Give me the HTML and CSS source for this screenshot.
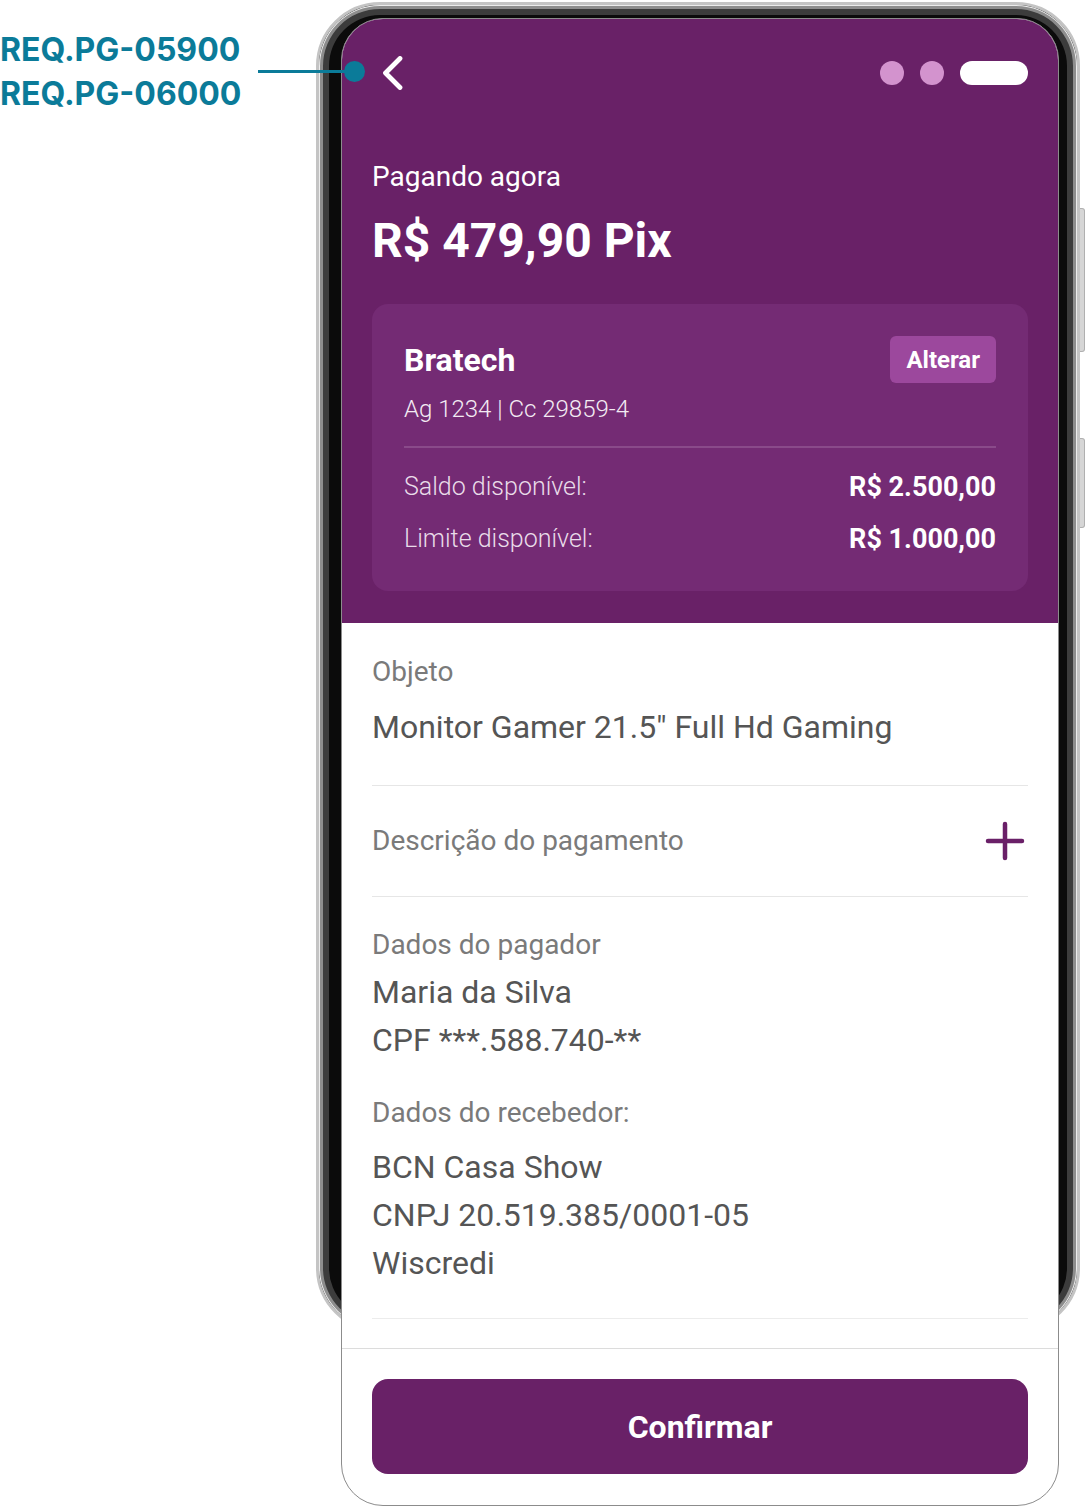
FILE: index.html
```html
<!DOCTYPE html>
<html lang="pt-BR">
<head>
<meta charset="utf-8">
<title>Pagamento Pix</title>
<link rel="stylesheet" href="styles.css">
</head>
<body>
<div class="canvas">
  <div class="annotation">
    <div class="req-labels">
      <div class="req">REQ.PG-05900</div>
      <div class="req">REQ.PG-06000</div>
    </div>
    <div class="connector"></div>
    <div class="connector-dot"></div>
  </div>

  <div class="phone">
    <div class="frame">
      <span class="side-btn side-btn-1"></span>
      <span class="side-btn side-btn-2"></span>
    </div>
    <div class="screen">
      <header class="hero">
        <div class="topbar">
          <svg class="back" width="24" height="34" viewBox="0 0 24 34" aria-hidden="true">
            <path d="M18 2.5 L3.5 17 L18 31.5" fill="none" stroke="#fff" stroke-width="4.8" stroke-linecap="round" stroke-linejoin="round"/>
          </svg>
          <div class="steps">
            <span class="step"></span>
            <span class="step"></span>
            <span class="step step-active"></span>
          </div>
        </div>
        <div class="pay-label">Pagando agora</div>
        <div class="pay-amount">R$ 479,90 Pix</div>

        <section class="account">
          <div class="account-head">
            <div class="bank">Bratech</div>
            <button class="change">Alterar</button>
          </div>
          <div class="agency">Ag 1234 | Cc 29859-4</div>
          <div class="account-divider"></div>
          <div class="balance-row">
            <span class="balance-label">Saldo disponível:</span>
            <span class="balance-value">R$ 2.500,00</span>
          </div>
          <div class="balance-row balance-row-2">
            <span class="balance-label">Limite disponível:</span>
            <span class="balance-value">R$ 1.000,00</span>
          </div>
        </section>
      </header>

      <main class="details">
        <div class="block block-object">
          <div class="label">Objeto</div>
          <div class="value value-object">Monitor Gamer 21.5" Full Hd Gaming</div>
        </div>
        <div class="desc-row">
          <span class="label">Descrição do pagamento</span>
          <svg class="plus" width="40" height="40" viewBox="0 0 40 40" aria-hidden="true">
            <path d="M20 3 V37 M3 20 H37" fill="none" stroke="#6a2068" stroke-width="4.5" stroke-linecap="round"/>
          </svg>
        </div>
        <div class="block block-people">
          <div class="label line">Dados do pagador</div>
          <div class="value line">Maria da Silva</div>
          <div class="value line">CPF ***.588.740-**</div>
          <div class="label line receiver">Dados do recebedor:</div>
          <div class="value line">BCN Casa Show</div>
          <div class="value line">CNPJ 20.519.385/0001-05</div>
          <div class="value line">Wiscredi</div>
        </div>
      </main>

      <footer class="footer">
        <button class="confirm">Confirmar</button>
      </footer>
    </div>
  </div>
</div>
</body>
</html>
```

FILE: styles.css
```css
* { box-sizing: border-box; }

html, body {
  margin: 0;
  padding: 0;
  background: #fff;
}

body {
  font-family: Roboto, "Liberation Sans", Arial, sans-serif;
}

.canvas {
  position: relative;
  width: 1086px;
  height: 1506px;
  overflow: hidden;
  display: flex;
  padding-left: 316px;
  padding-top: 2px;
}

/* ---------- annotation ---------- */
.annotation {
  position: absolute;
  left: 0;
  top: 0;
  width: 370px;
  height: 120px;
  z-index: 5;
}

.req-labels {
  position: absolute;
  left: 0;
  top: 28px;
  display: flex;
  flex-direction: column;
}

.req {
  font-family: Inter, "Open Sans", sans-serif;
  font-weight: 700;
  font-size: 32px;
  line-height: 44px;
  color: #0b7b99;
}

.connector {
  position: absolute;
  left: 258px;
  top: 70px;
  width: 96px;
  height: 3px;
  background: #0b7b99;
}

.connector-dot {
  position: absolute;
  left: 344px;
  top: 61px;
  width: 21px;
  height: 21px;
  border-radius: 50%;
  background: #0b7b99;
}

/* ---------- phone ---------- */
.phone {
  position: relative;
  width: 764px;
  padding: 16px 21px 0 25px;
}

.frame {
  position: absolute;
  left: 0;
  top: 0;
  width: 764px;
  height: 1330px;
  border-radius: 64px;
  border: 3px solid #c4c4c4;
  background: #0b0b0b;
  box-shadow: inset 0 0 0 1px #ececec, inset 0 0 0 4px #8d8d8d, inset 0 0 0 10px #3c3c3c;
}

.side-btn {
  position: absolute;
  right: -8px;
  width: 5px;
  border-radius: 0 3px 3px 0;
  background: #d6d6d6;
  border: 1px solid #b0b0b0;
  border-left: none;
}
.side-btn-1 { top: 203px; height: 144px; }
.side-btn-2 { top: 433px; height: 90px; }

.screen {
  position: relative;
  width: 718px;
  height: 1488px;
  border: 1.5px solid #8c8c8c;
  border-radius: 42px;
  background: #fff;
  overflow: hidden;
  display: flex;
  flex-direction: column;
}

/* ---------- hero ---------- */
.hero {
  background: #692167;
  padding: 0 30px 32px 30px;
  color: #fff;
}

.topbar {
  height: 32px;
  margin-top: 38px;
  display: flex;
  align-items: center;
  justify-content: space-between;
}

.back {
  margin-left: 10px;
}

.steps {
  display: flex;
  align-items: center;
  gap: 16px;
}

.step {
  width: 24px;
  height: 24px;
  border-radius: 50%;
  background: #d393ce;
}

.step-active {
  width: 68px;
  border-radius: 12px;
  background: #fff;
}

.pay-label {
  margin-top: 72px;
  font-size: 28px;
  line-height: 32px;
}

.pay-amount {
  margin-top: 20px;
  font-size: 48px;
  line-height: 56px;
  font-weight: 700;
}

.account {
  margin-top: 35px;
  background: #742b74;
  border-radius: 16px;
  padding: 32px 32px 38px 32px;
}

.account-head {
  display: flex;
  align-items: center;
  justify-content: space-between;
  height: 47px;
}

.bank {
  font-size: 32px;
  font-weight: 700;
  line-height: 36px;
}

.change {
  font-family: inherit;
  border: none;
  background: #9c489d;
  color: #fff;
  font-size: 24px;
  font-weight: 700;
  height: 47px;
  padding: 0 16px;
  border-radius: 6px;
}

.agency {
  margin-top: 12px;
  font-size: 24px;
  line-height: 28px;
  font-weight: 300;
  color: #f3ebf3;
}

.account-divider {
  margin-top: 23px;
  height: 1.5px;
  background: #8a4a8a;
}

.balance-row {
  margin-top: 25px;
  display: flex;
  justify-content: space-between;
  align-items: center;
  height: 28px;
}

.balance-row-2 { margin-top: 24px; }

.balance-label {
  font-size: 25px;
  font-weight: 300;
  color: #e9dce9;
}

.balance-value {
  font-size: 27px;
  font-weight: 700;
}

/* ---------- details ---------- */
.details {
  padding: 0 30px;
  flex: 1;
}

.label {
  font-size: 28px;
  color: #7a7a7a;
}

.value {
  font-size: 32px;
  color: #555;
}

.block-object {
  padding-top: 33px;
  padding-bottom: 40px;
  border-bottom: 1.5px solid #e6e6e6;
}

.block-object .label { line-height: 32px; }

.value-object {
  margin-top: 21px;
  line-height: 36px;
}

.desc-row {
  height: 111px;
  display: flex;
  align-items: center;
  justify-content: space-between;
  border-bottom: 1.5px solid #e6e6e6;
}

.plus { margin-right: 3px; }

.block-people {
  padding-top: 24px;
  padding-bottom: 31px;
  border-bottom: 1.5px solid #ececec;
}

.block-people .value:nth-child(2) { margin-top: -1px; }

.line { line-height: 48px; }

.receiver { margin-top: 25px; margin-bottom: 6px; }

/* ---------- footer ---------- */
.footer {
  border-top: 1.5px solid #dcdcdc;
  margin-top: 25px;
  padding: 30px 30px 31px 30px;
}

.confirm {
  width: 100%;
  height: 95px;
  border: none;
  border-radius: 16px;
  background: #692167;
  color: #fff;
  font-family: inherit;
  font-size: 32px;
  font-weight: 700;
}
```
